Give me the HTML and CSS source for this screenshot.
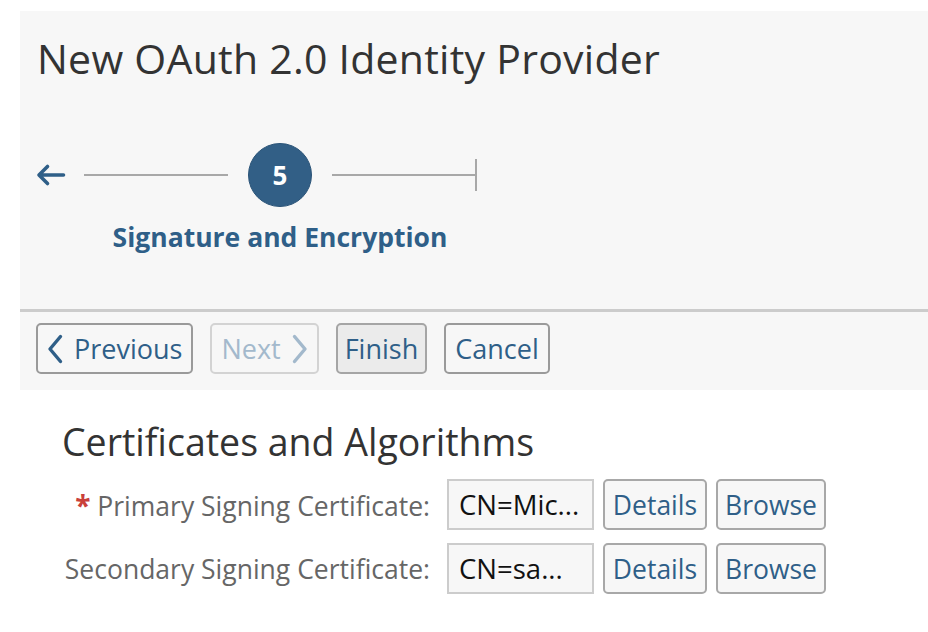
FILE: index.html
```html
<!DOCTYPE html>
<html>
<head>
<meta charset="utf-8">
<link rel="stylesheet" href="styles.css">
</head>
<body>
<div class="panel">
  <div class="header">
    <h1 class="title">New OAuth 2.0 Identity Provider</h1>
    <div class="stepper">
      <svg class="back" width="30" height="24" viewBox="0 0 30 24"><path d="M27.5 12H3.5M11.5 3.5L3 12l8.5 8.5" fill="none" stroke="#2f5f88" stroke-width="3.6" stroke-linecap="round" stroke-linejoin="round"/></svg>
      <div class="line"></div>
      <div class="step">
        <div class="circle">5</div>
        <div class="step-label">Signature and Encryption</div>
      </div>
      <div class="line end"></div>
    </div>
  </div>
  <div class="sep"></div>
  <div class="toolbar">
    <button class="btn prev"><svg width="16" height="30" viewBox="0 0 16 30"><path d="M13.5 2.5L3 15l10.5 12.5" fill="none" stroke="#2f5f88" stroke-width="3.4" stroke-linecap="round" stroke-linejoin="round"/></svg>Previous</button>
    <button class="btn next" disabled>Next<svg width="16" height="30" viewBox="0 0 16 30"><path d="M2.5 2.5L13 15 2.5 27.5" fill="none" stroke="#a3b9cc" stroke-width="3.4" stroke-linecap="round" stroke-linejoin="round"/></svg></button>
    <button class="btn finish">Finish</button>
    <button class="btn">Cancel</button>
  </div>
</div>
<div class="content">
  <h2 class="section">Certificates and Algorithms</h2>
  <div class="form">
    <label class="lbl"><span class="req">*</span> Primary Signing Certificate:</label>
    <div class="field">CN=Mic...</div>
    <button class="sbtn">Details</button>
    <button class="sbtn">Browse</button>
    <label class="lbl">Secondary Signing Certificate:</label>
    <div class="field">CN=sa...</div>
    <button class="sbtn">Details</button>
    <button class="sbtn">Browse</button>
  </div>
</div>
</body>
</html>
```
FILE: styles.css
```css
html, body {
  margin: 0;
  padding: 0;
  background: #ffffff;
  font-family: "Open Sans", "Noto Sans", sans-serif;
}
.panel {
  margin: 11px 0 0 20px;
  background: #f7f7f7;
}
.header {
  height: 298px;
  padding-left: 16px;
  box-sizing: border-box;
  padding-top: 23px;
}
.title {
  margin: 0 0 0 1px;
  font-size: 41px;
  line-height: 48px;
  font-weight: 400;
  color: #333333;
  letter-spacing: 0.25px;
}
.stepper {
  display: flex;
  align-items: flex-start;
  margin-top: 61px;
}
.back {
  margin-top: 20px;
  flex: none;
}
.line {
  width: 144px;
  height: 2px;
  background: #a8a8a8;
  margin: 31px 20px 0;
  flex: none;
}
.back + .line {
  margin-left: 18px;
}
.line.end {
  width: 145px;
  position: relative;
}
.line.end::after {
  content: "";
  position: absolute;
  right: 0;
  top: -15px;
  width: 2px;
  height: 32px;
  background: #a8a8a8;
}
.step {
  width: 64px;
  display: flex;
  flex-direction: column;
  align-items: center;
  flex: none;
}
.circle {
  width: 62px;
  height: 62px;
  border-radius: 50%;
  background: #325f86;
  border: 1px solid #2b5478;
  color: #ffffff;
  font-weight: 700;
  font-size: 26px;
  display: flex;
  align-items: center;
  justify-content: center;
}
.step-label {
  white-space: nowrap;
  margin-top: 12px;
  font-size: 26.5px;
  font-weight: 700;
  color: #2f5f88;
}
.sep {
  height: 3px;
  background: #cccccc;
}
.toolbar {
  display: flex;
  gap: 17px;
  padding: 11px 16px 16px;
}
.btn {
  height: 51px;
  box-sizing: border-box;
  border: 2px solid #9a9a9a;
  border-radius: 5px;
  background: #f7f7f7;
  color: #2f5f88;
  font-family: inherit;
  font-size: 27px;
  padding: 0 9px;
  display: flex;
  align-items: center;
  gap: 11px;
}
.btn.prev { padding-left: 9px; }
.btn.next {
  border-color: #d3d3d3;
  color: #a3b9cc;
}
.btn.finish {
  background: #ebebeb;
  border-color: #a5a5a5;
  padding: 0 7px;
}
.content {
  padding: 30px 0 0 62px;
}
.section {
  margin: 0;
  font-size: 37.5px;
  font-weight: 400;
  line-height: 44px;
  color: #333333;
}
.form {
  display: grid;
  grid-template-columns: 376px 147px 104px 110px;
  grid-auto-rows: 51px;
  column-gap: 9px;
  row-gap: 13px;
  margin-top: 15px;
  align-items: center;
}
.lbl {
  text-align: right;
  font-size: 26.5px;
  color: #666666;
  margin-right: 8px;
  white-space: nowrap;
}
.req {
  color: #c9403a;
  font-weight: 700;
  font-size: 28px;
}
.field {
  height: 51px;
  box-sizing: border-box;
  border: 2px solid #cccccc;
  background: #f7f7f7;
  color: #111111;
  font-size: 27.5px;
  padding-left: 10px;
  display: flex;
  align-items: center;
}
.sbtn {
  height: 51px;
  box-sizing: border-box;
  border: 2px solid #a8a8a8;
  border-radius: 5px;
  background: #f7f7f7;
  color: #2f5f88;
  font-family: inherit;
  font-size: 26.5px;
  padding: 0;
}
```
